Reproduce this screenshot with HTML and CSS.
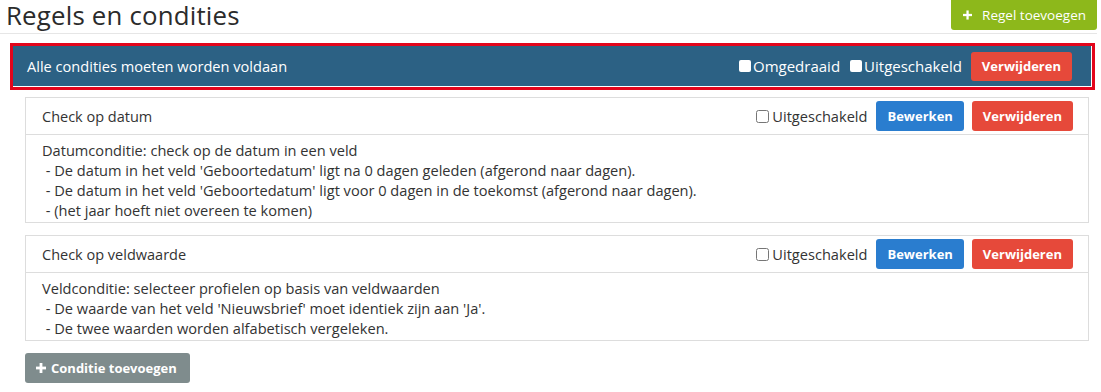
FILE: index.html
```html
<!DOCTYPE html>
<html lang="nl">
<head>
<meta charset="utf-8">
<title>Regels en condities</title>
<link rel="stylesheet" href="styles.css">
</head>
<body>
<div class="page">
  <div class="topbar">
    <h1 class="title">Regels en condities</h1>
    <button class="btn btn-green btn-add-rule">
      <svg class="plus" width="12" height="12" viewBox="0 0 12 12"><rect x="4.5" y="0" width="3" height="12" fill="#fff"/><rect x="0" y="4.5" width="12" height="3" fill="#fff"/></svg>
      <span>Regel toevoegen</span>
    </button>
  </div>

  <div class="highlight">
    <div class="rulebar">
      <span class="rulebar-title">Alle condities moeten worden voldaan</span>
      <div class="actions">
        <label class="check check-light"><input type="checkbox" class="cb-light">Omgedraaid</label>
        <label class="check check-light"><input type="checkbox" class="cb-light">Uitgeschakeld</label>
        <button class="btn btn-red">Verwijderen</button>
      </div>
    </div>
  </div>

  <div class="card">
    <div class="card-head">
      <span class="card-title">Check op datum</span>
      <div class="actions">
        <label class="check"><input type="checkbox" class="cb">Uitgeschakeld</label>
        <button class="btn btn-blue">Bewerken</button>
        <button class="btn btn-red">Verwijderen</button>
      </div>
    </div>
    <div class="card-body">
      <div>Datumconditie: check op de datum in een veld</div>
      <div>&nbsp;- De datum in het veld 'Geboortedatum' ligt na 0 dagen geleden (afgerond naar dagen).</div>
      <div>&nbsp;- De datum in het veld 'Geboortedatum' ligt voor 0 dagen in de toekomst (afgerond naar dagen).</div>
      <div>&nbsp;- (het jaar hoeft niet overeen te komen)</div>
    </div>
  </div>

  <div class="card">
    <div class="card-head">
      <span class="card-title">Check op veldwaarde</span>
      <div class="actions">
        <label class="check"><input type="checkbox" class="cb">Uitgeschakeld</label>
        <button class="btn btn-blue">Bewerken</button>
        <button class="btn btn-red">Verwijderen</button>
      </div>
    </div>
    <div class="card-body">
      <div>Veldconditie: selecteer profielen op basis van veldwaarden</div>
      <div>&nbsp;- De waarde van het veld 'Nieuwsbrief' moet identiek zijn aan 'Ja'.</div>
      <div>&nbsp;- De twee waarden worden alfabetisch vergeleken.</div>
    </div>
  </div>

  <button class="btn btn-gray btn-add-cond">
    <svg class="plus" width="10" height="10" viewBox="0 0 10 10"><rect x="3.6" y="0" width="2.8" height="10" fill="#fff"/><rect x="0" y="3.6" width="10" height="2.8" fill="#fff"/></svg>
    <span>Conditie toevoegen</span>
  </button>
</div>
</body>
</html>
```

FILE: styles.css
```css
html, body {
  margin: 0;
  padding: 0;
  background: #fff;
}
body {
  font-family: "Open Sans", "Noto Sans", sans-serif;
  color: #333;
  font-size: 14px;
  overflow: hidden;
}
.page {
  width: 1101px;
  height: 392px;
}
.topbar {
  display: flex;
  justify-content: space-between;
  align-items: flex-start;
  height: 33px;
  margin-right: 4px;
  border-bottom: 1px solid #e6e6e6;
}
.title {
  margin: 0 0 0 6px;
  font-size: 25.8px;
  font-weight: 400;
  line-height: 31px;
  color: #2b2b2b;
  letter-spacing: 0.2px;
}
.btn {
  font-family: "Open Sans", "Noto Sans", sans-serif;
  border: none;
  border-radius: 3px;
  color: #fff;
  font-size: 13px;
  font-weight: 700;
  height: 29px;
  padding: 0 11px;
  display: inline-flex;
  align-items: center;
  gap: 6px;
  cursor: pointer;
  white-space: nowrap;
}
.btn-green {
  background: #8db81b;
  font-weight: 400;
  height: 34px;
  margin-top: -4px;
  padding: 4px 11px 0 12px;
  gap: 10px;
  width: 146px;
  font-size: 13.5px;
}
.btn-red { background: #e6493a; }
.btn-blue { background: #2a7dcf; }
.btn-gray { background: #7f8c8d; }

.highlight {
  margin: 9px 6px 0 10px;
  border: 3px solid #e3051b;
  padding: 0 1px 1px 0;
}
.rulebar {
  background: #2c6184;
  height: 40px;
  display: flex;
  align-items: center;
  justify-content: space-between;
  padding: 0 19px 0 14px;
  color: #fff;
}
.rulebar-title {
  font-size: 14.6px;
}
.actions {
  display: flex;
  align-items: center;
}
.check {
  display: inline-flex;
  align-items: center;
  font-size: 15px;
  margin-right: 9px;
}
.card .check { font-size: 14.6px; }
.cb {
  margin: 0 3px 0 0;
  width: 13px;
  height: 13px;
}
.cb-light {
  appearance: none;
  -webkit-appearance: none;
  width: 12px;
  height: 12px;
  margin: 0 2px 0 0;
  background: #fff;
  border-radius: 2px;
}
.check-light + .check-light { margin-left: 1px; }
.actions .btn + .btn { margin-left: 8px; }

.card {
  margin: 7px 12px 0 25px;
  border: 1px solid #dddddd;
}
.card + .card { margin-top: 12px; }
.card-head {
  height: 36px;
  display: flex;
  align-items: center;
  justify-content: space-between;
  padding: 0 15px 0 16px;
  border-bottom: 1px solid #dddddd;
}
.card-head .btn { height: 30px; }
.card-title { font-size: 14.5px; }
.card-body {
  padding: 5px 16px 2px;
  line-height: 20px;
  font-size: 14.6px;
}
.btn-add-cond {
  margin: 12px 0 0 25px;
  height: 30px;
  padding: 0 12px 0 11px;
  width: 165px;
  gap: 5px;
}
.plus { display: block; }
```
